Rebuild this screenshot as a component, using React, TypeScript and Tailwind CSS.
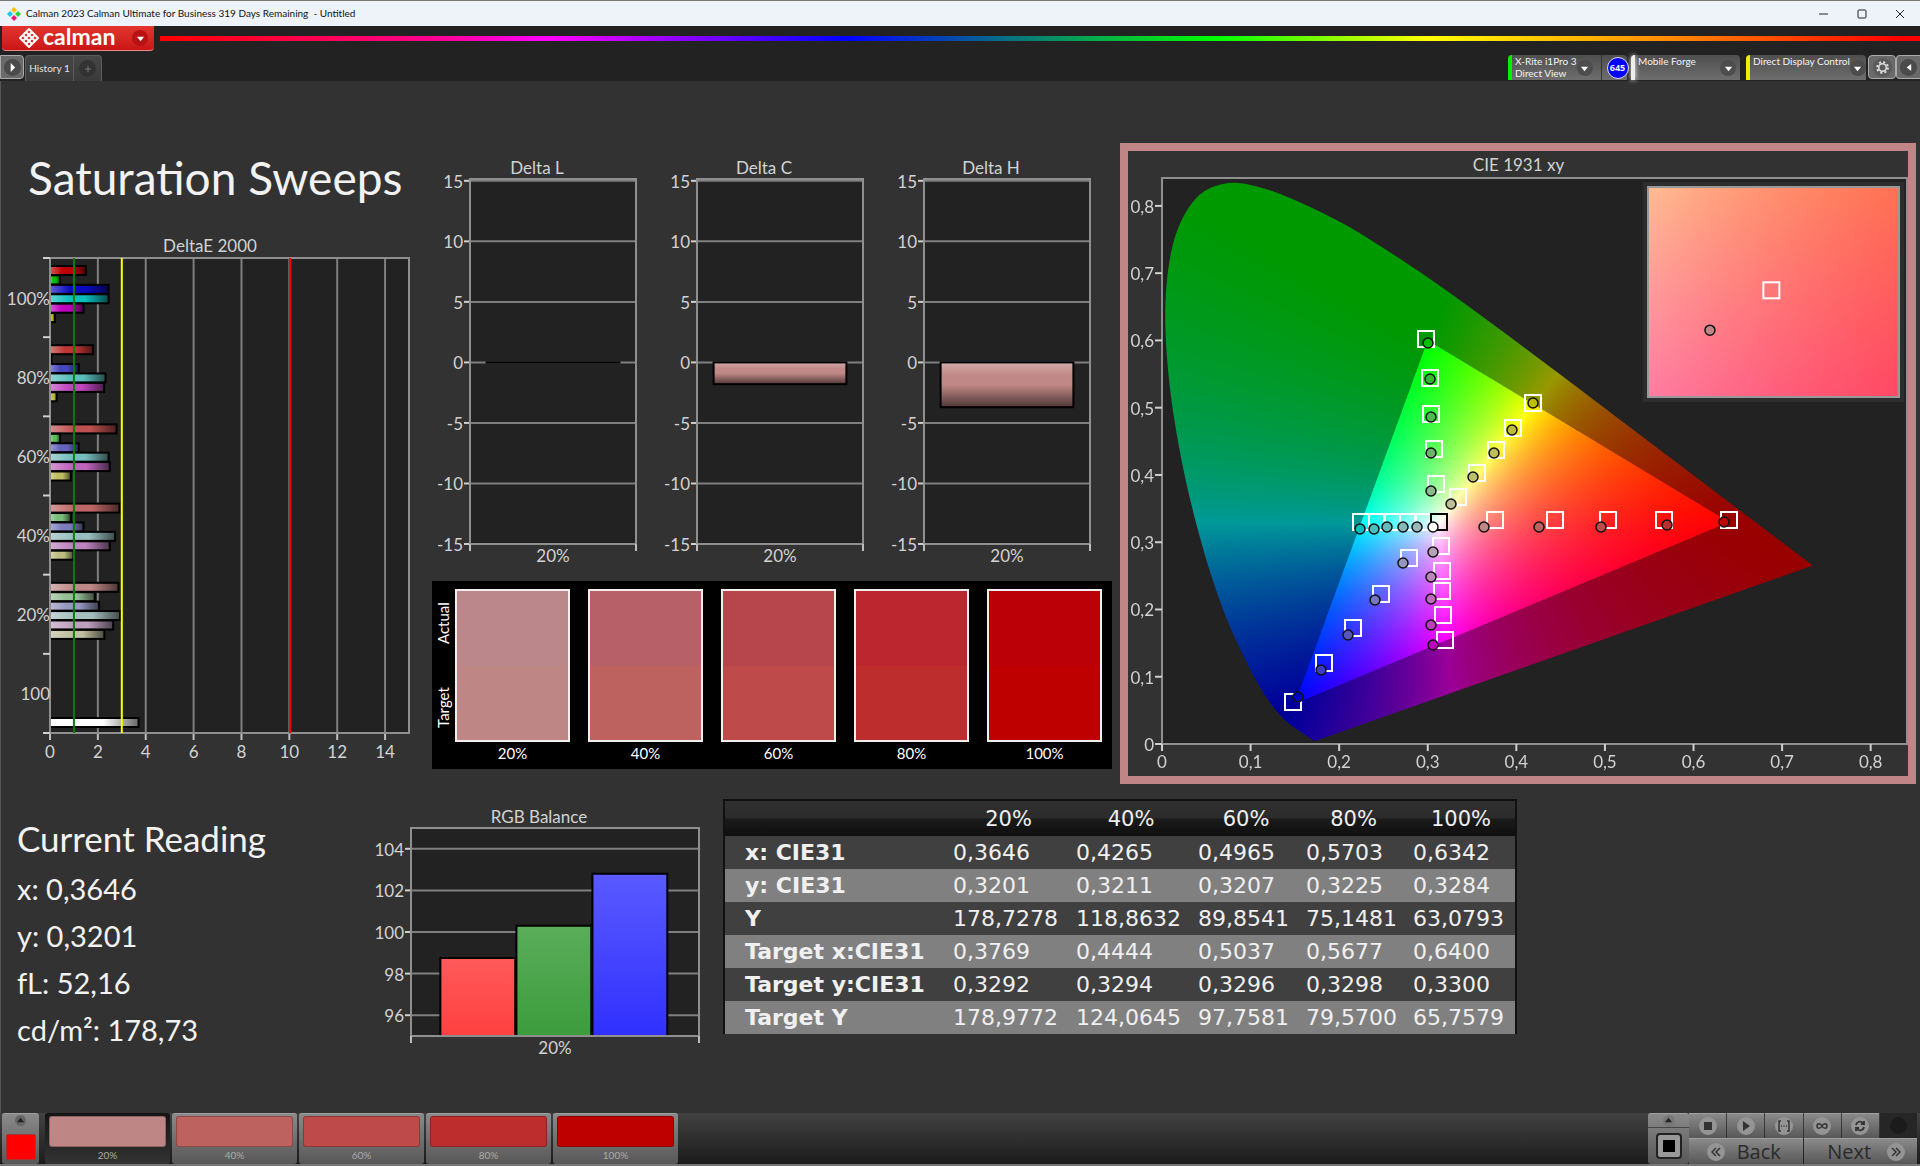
import { useEffect, useRef } from "react";
import type { ReactNode } from "react";

const LABEL = "fill-[#d2d2d2] text-[17px]";

/* ---------- chromaticity drawing ---------- */

const LOCUS: [number, number][] = [
  [0.1741, 0.005], [0.1733, 0.0048], [0.1714, 0.0051], [0.1689, 0.0069], [0.1644, 0.0109],
  [0.1566, 0.0177], [0.144, 0.0297], [0.1355, 0.0399], [0.1241, 0.0578], [0.1096, 0.0868],
  [0.0913, 0.1327], [0.0687, 0.2007], [0.0454, 0.295], [0.0235, 0.4127], [0.0082, 0.5384],
  [0.0039, 0.6548], [0.0139, 0.7502], [0.0389, 0.812], [0.0743, 0.8338], [0.1142, 0.8262],
  [0.1547, 0.8059], [0.1929, 0.7816], [0.2296, 0.7543], [0.3016, 0.6923], [0.3731, 0.6245],
  [0.4441, 0.5547], [0.5125, 0.4866], [0.5752, 0.4242], [0.627, 0.3725], [0.6658, 0.334],
  [0.6915, 0.3083], [0.719, 0.2809], [0.7347, 0.2653],
];

const GAMUT: [number, number][] = [[0.64, 0.33], [0.3, 0.6], [0.15, 0.06]];

function insideGamut(x: number, y: number) {
  let sign = 0;
  for (let i = 0; i < 3; i++) {
    const [ax, ay] = GAMUT[i];
    const [bx, by] = GAMUT[(i + 1) % 3];
    const c = (bx - ax) * (y - ay) - (by - ay) * (x - ax);
    if (sign === 0) sign = Math.sign(c);
    else if (Math.sign(c) !== sign) return false;
  }
  return true;
}

type Range = { x0: number; x1: number; y0: number; y1: number };

function ChromaCanvas({ range, width, height, locus, className }: {
  range: Range; width: number; height: number; locus?: boolean; className: string;
}) {
  const ref = useRef<HTMLCanvasElement>(null);
  useEffect(() => {
    const ctx = ref.current?.getContext("2d");
    if (!ctx) return;
    const img = ctx.createImageData(width, height);
    for (let j = 0; j < height; j++) {
      const y = range.y1 - ((j + 0.5) / height) * (range.y1 - range.y0);
      for (let i = 0; i < width; i++) {
        const x = range.x0 + ((i + 0.5) / width) * (range.x1 - range.x0);
        const z = 1 - x - y;
        const r = Math.max(0, 3.2406 * x - 1.5372 * y - 0.4986 * z);
        const g = Math.max(0, -0.9689 * x + 1.8758 * y + 0.0415 * z);
        const b = Math.max(0, 0.0557 * x - 0.204 * y + 1.057 * z);
        const k = ((insideGamut(x, y) ? 1 : 0.6) * 255) / Math.max(r, g, b, 0.0001);
        const o = (j * width + i) * 4;
        img.data[o] = r * k;
        img.data[o + 1] = g * k;
        img.data[o + 2] = b * k;
        img.data[o + 3] = 255;
      }
    }
    ctx.putImageData(img, 0, 0);
    if (!locus) return;
    const p = LOCUS.map(([x, y]) => [
      ((x - range.x0) / (range.x1 - range.x0)) * width,
      ((range.y1 - y) / (range.y1 - range.y0)) * height,
    ]);
    ctx.globalCompositeOperation = "destination-in";
    ctx.beginPath();
    ctx.moveTo(p[0][0], p[0][1]);
    for (let i = 0; i < p.length - 1; i++) {
      const a = p[Math.max(0, i - 1)], b = p[i], c = p[i + 1], d = p[Math.min(p.length - 1, i + 2)];
      ctx.bezierCurveTo(
        b[0] + (c[0] - a[0]) / 6, b[1] + (c[1] - a[1]) / 6,
        c[0] - (d[0] - b[0]) / 6, c[1] - (d[1] - b[1]) / 6,
        c[0], c[1],
      );
    }
    ctx.closePath();
    ctx.fill();
  }, [range, width, height, locus]);
  return <canvas ref={ref} width={width} height={height} className={className} />;
}

const FULL: Range = { x0: 0, x1: 0.841, y0: 0, y1: 0.8415 };
const DETAIL: Range = { x0: 0.3517, x1: 0.4021, y0: 0.305, y1: 0.3534 };

/* Positions on a 745 x 566 plot. */
const TARGETS: [number, number][] = [
  [264, 161], [268, 200], [269, 236], [272, 271], [274, 306],
  [371, 225], [351, 250], [334, 272], [315, 295], [296, 319],
  [333, 342], [393, 342], [446, 342], [502, 342], [567, 342],
  [199, 344], [215, 344], [230, 344], [246, 344], [261, 344],
  [247, 380], [219, 416], [191, 450], [162, 485], [131, 524],
  [279, 368], [280, 393], [280, 413], [281, 437], [283, 462],
];

const READINGS: [number, number, string][] = [
  [266, 165, "#00be00"], [268, 201, "#2dbe2d"], [269, 239, "#4abe4a"], [269, 275, "#68b568"], [269, 313, "#8db98d"],
  [371, 225, "#bebe00"], [350, 252, "#bebe3c"], [332, 275, "#bebe55"], [311, 299, "#bebe70"], [289, 326, "#bebe96"],
  [322, 349, "#be8684"], [377, 349, "#be6260"], [439, 349, "#be4a4a"], [505, 347, "#be2d2e"], [562, 344, "#be0000"],
  [198, 351, "#00bebe"], [212, 351, "#4abebe"], [225, 349, "#68b9b9"], [241, 349, "#86b9b9"], [255, 349, "#9bb9b9"],
  [241, 385, "#9696be"], [213, 422, "#7878be"], [186, 457, "#5555be"], [159, 492, "#3c3cbe"], [136, 519, "#0000be"],
  [271, 374, "#b9a0b9"], [269, 399, "#be86be"], [269, 421, "#be68be"], [269, 447, "#be3cbe"], [271, 467, "#be00be"],
  [271, 349, "#ffffff"],
];

const pct = (v: number) => `${v * 100}%`;

function Square({ x, y, color }: { x: string; y: string; color: string }) {
  return (
    <svg x={x} y={y} className="overflow-visible">
      <rect x={-8} y={-8} width={16} height={16} fill="none" stroke={color} strokeWidth={2} />
    </svg>
  );
}

function Dot({ x, y, color }: { x: string; y: string; color: string }) {
  return <circle cx={x} cy={y} r={5} fill={color} stroke="#111" strokeWidth={1.5} />;
}

function CiePanel() {
  const ticks = [0, 1, 2, 3, 4, 5, 6, 7, 8];
  const name = (t: number) => (t === 0 ? "0" : `0,${t}`);
  return (
    <section className="mt-[62px] mr-1 border-8 border-[#c08687] bg-[#323232] pr-px pb-8 pl-[34px]">
      <h2 className="mr-8 flex h-[27px] items-center justify-center pt-px text-[17px] text-[#d2d2d2]">CIE 1931 xy</h2>
      <div className="relative h-[566px] bg-[#222]">
        <ChromaCanvas range={FULL} width={1490} height={1132} locus className="block h-full w-full" />
        <svg className="absolute inset-0 h-full w-full overflow-visible" role="img" aria-label="CIE 1931 xy chromaticity">
          <rect width="100%" height="100%" fill="none" stroke="#8f8f8f" strokeWidth={2} />
          {ticks.map((t) => (
            <g key={t} stroke="#cfcfcf" strokeWidth={2}>
              <svg y="100%" className="overflow-visible">
                <line x1={pct(t / 8.41)} x2={pct(t / 8.41)} y1={0} y2={7} />
              </svg>
              <line x1={-7} x2={0} y1={pct(1 - t / 8.415)} y2={pct(1 - t / 8.415)} />
              <text stroke="none" x={pct(t / 8.41)} y="100%" dy={24} textAnchor="middle" className={LABEL}>{name(t)}</text>
              <text stroke="none" x={-8} y={pct(1 - t / 8.415)} dy={7} textAnchor="end" className={LABEL}>{name(t)}</text>
            </g>
          ))}
          {TARGETS.map(([x, y], i) => <Square key={i} x={pct(x / 745)} y={pct(y / 566)} color="#fff" />)}
          <Square x={pct(277 / 745)} y={pct(344 / 566)} color="#000" />
          {READINGS.map(([x, y, c], i) => <Dot key={i} x={pct(x / 745)} y={pct(y / 566)} color={c} />)}
        </svg>
        <div className="absolute top-1 right-[3px] h-[220px] w-[35%] border-4 border-[#2d2d2d]">
          <ChromaCanvas range={DETAIL} width={252} height={212} className="block h-full w-full" />
          <svg className="absolute inset-0 h-full w-full">
            <rect width="100%" height="100%" fill="none" stroke="#999" strokeWidth={4} />
            <Square x="49.2%" y="49.2%" color="#fff" />
            <Dot x="24.9%" y="68%" color="#be8684" />
          </svg>
        </div>
      </div>
    </section>
  );
}

/* ---------- bar charts ---------- */

const HUES: Record<string, string[]> = {
  "100%": ["#be0000", "#00be00", "#0a0abe", "#0abebe", "#be00be", "#bebe00"],
  "80%": ["#be3535", "#35be35", "#4646be", "#5abebe", "#be46be", "#bebe46"],
  "60%": ["#be5050", "#5abe5a", "#6464be", "#78bebe", "#be64be", "#bebe64"],
  "40%": ["#be6666", "#78be78", "#7d7dbe", "#96bebe", "#be82be", "#bebe82"],
  "20%": ["#be8886", "#96be96", "#9696be", "#a5bebe", "#be9fbe", "#bebea0"],
};

const DELTA_E: [string, number[]][] = [
  ["100%", [1.5, 0.42, 2.45, 2.45, 1.4, 0.2]],
  ["80%", [1.8, 0.06, 1.2, 2.32, 2.26, 0.28]],
  ["60%", [2.78, 0.42, 1.2, 2.45, 2.5, 0.87]],
  ["40%", [2.9, 0.87, 1.4, 2.72, 2.5, 0.98]],
  ["20%", [2.86, 1.87, 2.05, 2.93, 2.64, 2.27]],
];

function HBar({ y, value, color }: { y: number; value: number; color: string }) {
  return (
    <svg y={pct(y / 475)} className="overflow-visible">
      <rect y={-4} width={pct(value / 15)} height={9} fill={color} />
      <rect y={-4} width={pct(value / 15)} height={9} fill="url(#shineX)" stroke="#000" strokeWidth={2} />
    </svg>
  );
}

function DeltaEChart() {
  return (
    <section className="mt-[21px]">
      <h2 className="mr-[9px] flex h-6 items-center justify-center text-[17px] text-[#d2d2d2]">DeltaE 2000</h2>
      <div className="mr-[19px] ml-[49px] h-[475px] bg-[#222]">
        <svg className="h-full w-full overflow-visible" role="img" aria-label="DeltaE 2000">
          <defs>
            <linearGradient id="shineX">
              <stop offset="0" stopColor="#fff" stopOpacity={0.35} />
              <stop offset="0.35" stopColor="#fff" stopOpacity={0} />
              <stop offset="0.6" stopColor="#000" stopOpacity={0} />
              <stop offset="1" stopColor="#000" stopOpacity={0.6} />
            </linearGradient>
          </defs>
          {[0, 2, 4, 6, 8, 10, 12, 14].map((t) => (
            <g key={t}>
              <line x1={pct(t / 15)} x2={pct(t / 15)} y1={0} y2="100%" stroke="#7f7f7f" strokeWidth={2} />
              <svg y="100%" className="overflow-visible">
                <line x1={pct(t / 15)} x2={pct(t / 15)} y1={0} y2={7} stroke="#bdbdbd" strokeWidth={2} />
              </svg>
              <text x={pct(t / 15)} y="100%" dy={25} textAnchor="middle" className={LABEL}>{t}</text>
            </g>
          ))}
          {DELTA_E.map(([name, values], b) =>
            values.map((v, i) => (
              <HBar key={`${name}${i}`} y={b * 79.2 + 12 + i * 9.42} value={v} color={HUES[name][i]} />
            )),
          )}
          <HBar y={464} value={3.7} color="#ffffff" />
          <rect width="100%" height="100%" fill="none" stroke="#8f8f8f" strokeWidth={2} />
          {[0, 1, 2, 3, 4, 5, 6].map((t) => (
            <line key={t} x1={-7} x2={0} y1={pct(t / 6)} y2={pct(t / 6)} stroke="#cfcfcf" strokeWidth={2} />
          ))}
          {["100%", "80%", "60%", "40%", "20%", "100"].map((n, i) => (
            <text key={i} x={0} y={pct((i + 0.5) / 6)} dy={7} textAnchor="end" className={LABEL}>{n}</text>
          ))}
          <line x1={pct(1 / 15)} x2={pct(1 / 15)} y1={0} y2="100%" stroke="#008000" strokeWidth={2} />
          <line x1={pct(3 / 15)} x2={pct(3 / 15)} y1={0} y2="100%" stroke="#ffff00" strokeWidth={2} />
          <line x1={pct(10.03 / 15)} x2={pct(10.03 / 15)} y1={0} y2="100%" stroke="#ff0000" strokeWidth={2} />
        </svg>
      </div>
    </section>
  );
}

function ValueChart({ title, min, max, ticks, height, children }: {
  title: string; min: number; max: number; ticks: number[]; height: string; children?: ReactNode;
}) {
  return (
    <section className="ml-[42px]">
      <h2 className="mr-[32px] flex h-6 items-center justify-center pt-px text-[17px] text-[#d2d2d2]">{title}</h2>
      <div className={`bg-[#222] ${height}`}>
        <svg className="h-full w-full overflow-visible" role="img" aria-label={title}>
          <defs>
            <linearGradient id="shineY" x2="0" y2="1">
              <stop offset="0" stopColor="#fff" stopOpacity={0.3} />
              <stop offset="0.3" stopColor="#fff" stopOpacity={0} />
              <stop offset="0.5" stopColor="#000" stopOpacity={0} />
              <stop offset="1" stopColor="#000" stopOpacity={0.6} />
            </linearGradient>
          </defs>
          {ticks.map((t) => {
            const y = pct((max - t) / (max - min));
            return (
              <g key={t}>
                <line x1={0} x2="100%" y1={y} y2={y} stroke="#7f7f7f" strokeWidth={2} />
                <line x1={-6} x2={0} y1={y} y2={y} stroke="#cfcfcf" strokeWidth={2} />
                <text x={-7} y={y} dy={7} textAnchor="end" className={LABEL}>{t}</text>
              </g>
            );
          })}
          <rect width="100%" height="100%" fill="none" stroke="#8f8f8f" strokeWidth={2} />
          {children}
          <svg y="100%" className="overflow-visible">
            <line x1={0} x2={0} y1={0} y2={7} stroke="#bdbdbd" strokeWidth={2} />
            <line x1="100%" x2="100%" y1={0} y2={7} stroke="#bdbdbd" strokeWidth={2} />
            <text x="50%" y={18} textAnchor="middle" className={LABEL}>20%</text>
          </svg>
        </svg>
      </div>
    </section>
  );
}

const DELTA_TOP = 15.15;

function DeltaBar({ value }: { value: number }) {
  const h = pct(value / (15 + DELTA_TOP));
  return (
    <svg y={pct(DELTA_TOP / (15 + DELTA_TOP))} x="10%" width="80%" height="100%" className="overflow-visible">
      <rect width="100%" height={h} fill="#c08886" />
      <rect width="100%" height={h} fill="url(#shineY)" stroke="#000" strokeWidth={2} />
    </svg>
  );
}

const DELTAS = [{ name: "Delta L", v: 0.01 }, { name: "Delta C", v: 1.8 }, { name: "Delta H", v: 3.7 }];

const BALANCE = [
  { x: 0.102, v: 98.75, top: "#ff5a5a", bottom: "#ff4040" },
  { x: 0.366, v: 100.3, top: "#5aad5a", bottom: "#3c9c3c" },
  { x: 0.63, v: 102.8, top: "#5a5aff", bottom: "#3030ff" },
];

function RgbBalance() {
  return (
    <ValueChart title="RGB Balance" min={95} max={105} ticks={[104, 102, 100, 98, 96]} height="h-[208px]">
      {BALANCE.map((b) => (
        <g key={b.top}>
          <linearGradient id={`g${b.top.slice(1)}`} x2="0" y2="1">
            <stop offset="0" stopColor={b.top} />
            <stop offset="1" stopColor={b.bottom} />
          </linearGradient>
          <rect x={pct(b.x)} width="26%" y={pct((105 - b.v) / 10)} height={pct((b.v - 95) / 10)}
            fill={`url(#g${b.top.slice(1)})`} stroke="#000" strokeWidth={2} />
        </g>
      ))}
      <line x1={0} x2="100%" y1="100%" y2="100%" stroke="#8f8f8f" strokeWidth={2} />
    </ValueChart>
  );
}

/* ---------- swatches ---------- */

const SWATCHES = [
  { name: "20%", actual: "bg-[#bb878b]", target: "bg-[#be8684]" },
  { name: "40%", actual: "bg-[#b76067]", target: "bg-[#be6260]" },
  { name: "60%", actual: "bg-[#b7454c]", target: "bg-[#be4a4a]" },
  { name: "80%", actual: "bg-[#bc262e]", target: "bg-[#be2d2e]" },
  { name: "100%", actual: "bg-[#bb0008]", target: "bg-[#bf0000]" },
];

function SwatchPanel() {
  return (
    <section className="mt-[37px] mr-2 ml-1 flex h-[188px] bg-black pt-2 pr-[10px] text-[15px] text-white">
      <div className="flex w-[23px] flex-col items-center">
        <span className="flex h-[68px] rotate-180 items-center justify-center [writing-mode:vertical-rl]">Actual</span>
        <span className="flex h-[102px] rotate-180 items-center justify-center [writing-mode:vertical-rl]">Target</span>
      </div>
      <div className="grid flex-1 grid-cols-5 gap-x-[18px]">
        {SWATCHES.map((s) => (
          <div key={s.name} className="text-center">
            <div className="flex h-[153px] flex-col border-2 border-[#f2eeee]">
              <div className={`flex-1 ${s.actual}`} />
              <div className={`flex-1 ${s.target}`} />
            </div>
            <span className="block">{s.name}</span>
          </div>
        ))}
      </div>
    </section>
  );
}

/* ---------- data table ---------- */

const ROWS: [string, string[]][] = [
  ["x: CIE31", ["0,3646", "0,4265", "0,4965", "0,5703", "0,6342"]],
  ["y: CIE31", ["0,3201", "0,3211", "0,3207", "0,3225", "0,3284"]],
  ["Y", ["178,7278", "118,8632", "89,8541", "75,1481", "63,0793"]],
  ["Target x:CIE31", ["0,3769", "0,4444", "0,5037", "0,5677", "0,6400"]],
  ["Target y:CIE31", ["0,3292", "0,3294", "0,3296", "0,3298", "0,3300"]],
  ["Target Y", ["178,9772", "124,0645", "97,7581", "79,5700", "65,7579"]],
];

function DataTable() {
  return (
    <div className="mt-[15px] self-start border-2 border-b-0 border-[#111]">
      <table className="w-full table-fixed border-collapse font-['DejaVu_Sans',sans-serif] text-[22px] text-[#f0f0f0]">
        <colgroup>
          <col />
          <col className="w-[123px]" />
          <col className="w-[122px]" />
          <col className="w-[108px]" />
          <col className="w-[107px]" />
          <col className="w-[108px]" />
        </colgroup>
        <thead>
          <tr className="h-[35px] bg-[linear-gradient(#303030_0%,#2b2b2b_48%,#1a1a1a_52%,#0f0f0f_100%)]">
            <th aria-label="Quantity" />
            {SWATCHES.map((s) => <th key={s.name} scope="col" className="px-0 pt-px pb-0 text-[21px] leading-7 font-normal">{s.name}</th>)}
          </tr>
        </thead>
        <tbody>
          {ROWS.map(([name, cells]) => (
            <tr key={name} className="h-[33px] odd:bg-[#404040] even:bg-[#808080]">
              <th scope="row" className="py-0 pr-0 pl-5 text-left leading-7 font-bold">{name}</th>
              {cells.map((c, i) => <td key={i} className="py-0 pr-0 pl-[6px] leading-7">{c}</td>)}
            </tr>
          ))}
        </tbody>
      </table>
    </div>
  );
}

/* ---------- chrome ---------- */

function Triangle({ dir, color = "#fff" }: { dir: "down" | "left" | "right" | "up"; color?: string }) {
  const d = { down: "M1 3h8L5 8z", up: "M1 7h8L5 2z", left: "M8 1v8L3 5z", right: "M3 0v10l5-5z" }[dir];
  return <svg viewBox="0 0 10 10" className="size-[9px]"><path d={d} fill={color} /></svg>;
}

function Well({ children, className = "size-4 bg-[#4d4d4d]" }: { children?: ReactNode; className?: string }) {
  return <span className={`flex shrink-0 items-center justify-center rounded-full ${className}`}>{children}</span>;
}

function TitleBar() {
  return (
    <header className="flex h-[26px] items-center border-t border-[#777] bg-[#eef3f9] pl-[7px] text-[10px] text-[#111]">
      <svg viewBox="0 0 14 14" className="mr-[5px] size-[14px]">
        <path d="M7 0l3 3-3 3-3-3z" fill="#ffc400" />
        <path d="M3 4l3 3-3 3-3-3z" fill="#18c8e8" />
        <path d="M11 4l3 3-3 3-3-3z" fill="#2fcf3c" />
        <path d="M7 8l3 3-3 3-3-3z" fill="#f0127a" />
      </svg>
      <h1 className="flex-1 whitespace-pre">Calman 2023 Calman Ultimate for Business 319 Days Remaining  - Untitled</h1>
      <button aria-label="Minimize" className="flex w-[38px] justify-center">
        <svg className="size-[10px]"><path d="M0 5h9" stroke="#222" /></svg>
      </button>
      <button aria-label="Maximize" className="flex w-[38px] justify-center">
        <svg className="size-[10px]"><rect x="1" y="1" width="8" height="8" rx="1" fill="none" stroke="#222" /></svg>
      </button>
      <button aria-label="Close" className="mr-px flex w-[38px] justify-center">
        <svg className="size-[10px]"><path d="M1 1l8 8M9 1L1 9" stroke="#222" /></svg>
      </button>
    </header>
  );
}

function CalmanLogo() {
  return (
    <svg viewBox="0 0 20 20" className="size-5" fill="none" stroke="#fff" strokeWidth="2" strokeLinejoin="round">
      <path d="M10 1l9 9-9 9-9-9z" />
      <path d="M7 4l9 9M4 7l9 9M13 4l-9 9M16 7l-9 9" />
    </svg>
  );
}

const DEVICE = "flex h-[25px] items-stretch rounded-t-[4px] bg-gradient-to-b from-[#4e4e4e] to-[#6e6e6e] text-[10px] leading-[12px] text-[#f4f4f4]";

function Device({ lines, bar, className, children }: { lines: string[]; bar: string; className: string; children?: ReactNode }) {
  return (
    <div className={`${DEVICE} ${className}`}>
      <span className={`w-1 shrink-0 rounded-tl-[4px] ${bar}`} />
      <button aria-haspopup="menu" className="flex flex-1 items-start justify-between pr-1 pl-[3px] text-left whitespace-nowrap">
        <span>{lines.map((l) => <span key={l} className="block">{l}</span>)}</span>
        <Well className="mt-[5px] size-4 bg-[#4d4d4d]"><Triangle dir="down" /></Well>
      </button>
      {children}
    </div>
  );
}

function Toolbar() {
  return (
    <div className="bg-[#222]">
      <div className="flex h-[25px] items-start pl-[2px]">
        <button className="flex h-[25px] w-[152px] items-center rounded-b-[4px] border-b border-[#e88] bg-gradient-to-b from-[#e3352f] to-[#c91414] pl-[17px] text-white">
          <CalmanLogo />
          <span className="ml-1 flex h-[25px] flex-1 items-center pb-[3px] text-left text-[23px] leading-none font-bold">calman</span>
          <Well className="mr-[6px] size-4 bg-[#b81212]"><Triangle dir="down" /></Well>
        </button>
        <div className="mt-[10px] ml-[6px] h-[5px] flex-1 bg-[linear-gradient(90deg,#f00_0%,#ff0096_16%,#f0f_22%,#00f_39%,#0a7a78_49%,#0f0_60%,#ff0_72%,#f80_86%,#f00_99%)]" />
      </div>
      <div className="flex h-[30px] items-start pt-[4px]">
        <button aria-label="Show panel" className="flex h-6 w-6 items-center justify-center rounded-r-[4px] border border-[#aaa] bg-[#6a6a6a]">
          <Well className="size-[17px] bg-[#4a4a4a]"><Triangle dir="right" /></Well>
        </button>
        <div className="ml-[1px] flex h-[26px] rounded-t-[4px] border border-b-0 border-[#5c5c5c] bg-gradient-to-b from-[#474747] to-[#3a3a3a]">
          <button className="w-[48px] border-r border-[#5c5c5c] text-[10px] whitespace-nowrap text-[#e4e4e4]">History 1</button>
          <button aria-label="Add tab" className="flex w-[27px] items-center justify-center">
            <Well className="size-[17px] bg-[#333]">
              <svg viewBox="0 0 8 8" className="size-2"><path d="M1 4h6M4 1v6" stroke="#777" /></svg>
            </Well>
          </button>
        </div>
        <div className="ml-auto flex items-start">
          <Device lines={["X-Rite i1Pro 3", "Direct View"]} bar="bg-[#00f000]" className="w-[119px]">
            <span className="ml-1 border-l border-[#333] pt-[2px] pr-[3px] pl-[5px]">
              <Well className="size-[22px] border border-[#dde] bg-[#0000ff] font-['Open_Sans',sans-serif] text-[9px] font-bold">645</Well>
            </span>
          </Device>
          <Device lines={["Mobile Forge"]} bar="bg-[#eee] shadow-[0_0_5px_#fff]" className="ml-1 w-[109px]" />
          <Device lines={["Direct Display Control"]} bar="bg-[#eeee00]" className="ml-[6px] w-[120px]" />
          <button aria-label="Settings" className="ml-[2px] flex h-6 w-7 items-center justify-center rounded-[4px] border border-[#aaa] bg-[#6a6a6a]">
            <Well className="size-[19px] bg-[#5a5a5a]">
              <svg viewBox="0 0 24 24" className="size-[13px]" fill="none" stroke="#ddd">
                <circle cx="12" cy="12" r="7" strokeWidth="3" />
                <circle cx="12" cy="12" r="10" strokeWidth="3.5" strokeDasharray="3.9 3.95" />
              </svg>
            </Well>
          </button>
          <button aria-label="Collapse" className="flex h-6 w-6 items-center justify-center rounded-l-[4px] border border-r-0 border-[#aaa] bg-[#6a6a6a]">
            <Well className="size-[17px] bg-[#4a4a4a]"><Triangle dir="left" /></Well>
          </button>
        </div>
      </div>
    </div>
  );
}

const METAL = "bg-gradient-to-b from-[#8a8a8a] to-[#585858] border-t border-[#a0a0a0]";

function Knob({ children }: { children?: ReactNode }) {
  return <Well className="size-[18px] bg-[#949494]">{children}</Well>;
}

const TRANSPORT: { name: string; icon: ReactNode }[] = [
  { name: "Stop", icon: <rect x="2" y="2" width="8" height="8" fill="#333" /> },
  { name: "Play", icon: <path d="M3 1v10l7-5z" fill="#333" /> },
  { name: "Range", icon: <path d="M3 1H1v10h2M9 1h2v10H9M3 6h1M5.5 6h1M8 6h1" stroke="#333" strokeWidth="1.5" fill="none" /> },
  { name: "Loop", icon: <path d="M6 6C4.5 3 1 3 1 6s3.500 3 5 0 5-3 5 0-3.500 3-5 0z" stroke="#333" strokeWidth="1.5" fill="none" /> },
  { name: "Refresh", icon: <path d="M2 5a4 4 0 0 1 7-2M10 7a4 4 0 0 1-7 2M10 1v3H7M2 11V8h3" stroke="#333" strokeWidth="1.8" fill="none" /> },
];

function BottomBar() {
  return (
    <footer className="flex h-[53px] items-start border-b-2 border-[#777] bg-gradient-to-b from-[#424242] to-[#1c1c1c] pr-[3px] pl-[2px]">
      <div className={`flex h-[51px] w-[37px] flex-col items-center rounded-[3px] ${METAL}`}>
        <button aria-label="Expand patterns" className="mt-px"><Well className="size-[11px] bg-[#666]"><Triangle dir="up" color="#222" /></Well></button>
        <button aria-label="Current pattern" className="mt-[8px] h-[26px] w-[30px] rounded-[2px] border border-[#a33] bg-[#ff0000]" />
      </div>
      <div className="ml-[6px] flex gap-[2px]">
        {SWATCHES.map((s, i) => (
          <button key={s.name} className={`flex h-[51px] w-[125px] flex-col rounded-[3px] px-1 pt-[2px] text-[10px] text-[#ababab] ${i === 0 ? "border-t border-[#151515] bg-gradient-to-b from-[#161616] to-[#333]" : METAL}`}>
            <span className={`h-[31px] w-full rounded-[3px] border border-black/25 ${s.target}`} />
            <span className="w-full text-center leading-[17px]">{s.name}</span>
          </button>
        ))}
      </div>
      <div className="ml-auto flex">
        <div className={`flex h-[51px] w-[41px] flex-col items-center rounded-[3px] ${METAL}`}>
          <button aria-label="Expand controls" className="flex h-[14px] w-full items-center justify-center border-b border-[#444]">
            <Well className="size-3 bg-[#777]"><Triangle dir="up" color="#222" /></Well>
          </button>
          <button aria-label="Display window" className="mt-[5px] flex size-[26px] items-center justify-center rounded-[4px] border-2 border-[#222] bg-[#999]">
            <span className="size-3 bg-black" />
          </button>
        </div>
        <div className="w-[228px]">
          <div className="grid h-[25px] grid-cols-6 gap-px">
            {TRANSPORT.map((t) => (
              <button key={t.name} aria-label={t.name} className={`flex items-center justify-center ${METAL}`}>
                <Knob><svg viewBox="0 0 12 12" className="size-3">{t.icon}</svg></Knob>
              </button>
            ))}
            <span className="flex items-center justify-center bg-[#262626]"><Well className="size-[17px] bg-[#1b1b1b]" /></span>
          </div>
          <div className="grid h-[26px] grid-cols-2 gap-px font-['Open_Sans',sans-serif] text-[20px] leading-none text-[#2a2a2a]">
            <button className={`flex items-center justify-center gap-3 pr-1 ${METAL}`}>
              <Knob><svg viewBox="0 0 10 10" className="size-[10px]"><path d="M5 1L1 5l4 4M9 1L5 5l4 4" stroke="#333" strokeWidth="1.5" fill="none" /></svg></Knob>
              Back
            </button>
            <button className={`flex items-center justify-center gap-4 pl-3 ${METAL}`}>
              Next
              <Knob><svg viewBox="0 0 10 10" className="size-[10px]"><path d="M1 1l4 4-4 4M5 1l4 4-4 4" stroke="#333" strokeWidth="1.5" fill="none" /></svg></Knob>
            </button>
          </div>
        </div>
      </div>
    </footer>
  );
}

export default function App() {
  return (
    <div className="flex min-h-screen flex-col bg-[#323232] font-[Lato,Carlito,sans-serif]">
      <TitleBar />
      <Toolbar />
      <main className="flex-1 border-l border-[#555]">
        <div className="grid grid-cols-[427fr_692fr_800fr]">
          <div className="pt-[62px]">
            <h2 className="pl-[27px] text-[46px] leading-[70px] text-[#f2f2f2]">Saturation Sweeps</h2>
            <DeltaEChart />
          </div>
          <div className="pt-[74px]">
            <div className="mr-[11px] grid grid-cols-3">
              {DELTAS.map((d) => (
                <div key={d.name} className="pr-[19px]">
                  <ValueChart title={d.name} min={-15} max={DELTA_TOP} ticks={[15, 10, 5, 0, -5, -10, -15]} height="h-[365px]">
                    <DeltaBar value={d.v} />
                  </ValueChart>
                </div>
              ))}
            </div>
            <SwatchPanel />
          </div>
          <CiePanel />
        </div>
        <div className="grid grid-cols-[368fr_354fr_794fr_403fr]">
          <section className="pt-[31px] pl-4 text-[29px] leading-[47px] text-[#f2f2f2]">
            <h2 className="pb-1 text-[35px] leading-[46px]">Current Reading</h2>
            <p>x: 0,3646</p>
            <p>y: 0,3201</p>
            <p>fL: 52,16</p>
            <p>cd/m²: 178,73</p>
          </section>
          <div className="mr-6 pt-[20px]">
            <RgbBalance />
          </div>
          <DataTable />
        </div>
      </main>
      <BottomBar />
    </div>
  );
}
